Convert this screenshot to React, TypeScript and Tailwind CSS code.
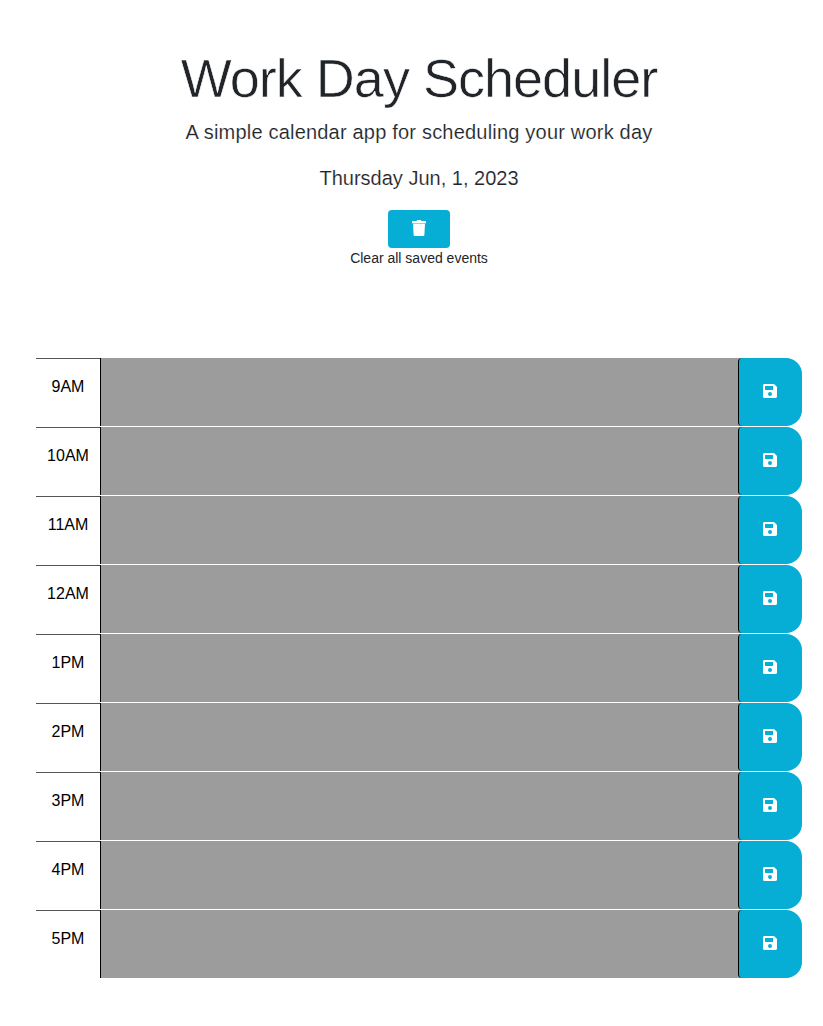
const hours = ['9AM', '10AM', '11AM', '12AM', '1PM', '2PM', '3PM', '4PM', '5PM'];

function TrashIcon() {
  return (
    <svg width="14" height="16" viewBox="0 0 14 16" fill="white" aria-hidden="true">
      <path d="M0 1h4.600l.5-1h3.800l.5 1H14v2.200H0zM1 3.800h12l-.6 10.900c0 .8-.6 1.300-1.400 1.300H3c-.8 0-1.400-.5-1.400-1.300z" />
    </svg>
  );
}

function SaveIcon() {
  return (
    <svg width="14" height="14" viewBox="0 0 14 14" fill="white" fillRule="evenodd" aria-hidden="true">
      <path d="M1.500 0H10.400c.4 0 .8.200 1.100.400L13.600 2.500c.3.300.4.700.4 1.100V12.500c0 .8-.7 1.500-1.500 1.500H1.500C.7 14 0 13.300 0 12.500V1.500C0 .7.7 0 1.500 0zM2.400 2C2.200 2 2 2.200 2 2.400V5.600C2 5.800 2.200 6 2.400 6H9.600C9.800 6 10 5.800 10 5.600V2.400C10 2.200 9.800 2 9.600 2zM7 8a2 2 0 1 0 0 4a2 2 0 0 0 0-4z" />
    </svg>
  );
}

function TimeBlock({ hour }: { hour: string }) {
  return (
    <div className="flex h-[68px]">
      <div className="w-16 border-t border-[#555] pt-4 text-center text-base leading-6 text-black">
        {hour}
      </div>
      <textarea
        aria-label={hour}
        className="block h-[68px] flex-1 resize-none border-l border-black bg-[#9c9c9c] p-1 text-black outline-none"
      />
      <div className="flex bg-[linear-gradient(to_right,#9c9c9c_4px,white_4px)]">
        <button
          aria-label="Save"
          className="flex h-[68px] w-16 items-center justify-center rounded-l-[4px] rounded-r-2xl border-l border-black bg-[#06aed5] pb-[2px] pr-px"
        >
          <SaveIcon />
        </button>
      </div>
    </div>
  );
}

export default function App() {
  return (
    <div className="h-[1026px] bg-white font-['Liberation_Sans',Arial,sans-serif] text-[#212529]">
      <header className="flex h-[358px] flex-col items-center pl-[15px] pt-[46px] text-center">
        <h1 className="whitespace-nowrap text-[54px] leading-[64px] tracking-[-0.98px] [-webkit-text-stroke:0.6px_white]">
          Work Day Scheduler
        </h1>
        <p className="mt-[7px] whitespace-nowrap text-xl leading-[30px] tracking-[0.2px] [-webkit-text-stroke:0.15px_white]">
          A simple calendar app for scheduling your work day
        </p>
        <p className="mt-4 whitespace-nowrap text-xl leading-[30px] [-webkit-text-stroke:0.15px_white]">
          Thursday Jun, 1, 2023
        </p>
        <button
          aria-label="Clear"
          className="mt-[17px] flex h-[38px] w-[62px] items-center justify-center rounded bg-[#06aed5] pb-[2px]"
        >
          <TrashIcon />
        </button>
        <p className="text-sm leading-[21px]">Clear all saved events</p>
      </header>
      <main className="ml-9 flex w-[766px] flex-col gap-px">
        {hours.map((hour) => (
          <TimeBlock key={hour} hour={hour} />
        ))}
      </main>
    </div>
  );
}
